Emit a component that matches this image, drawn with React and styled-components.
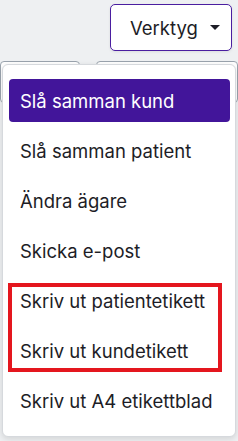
import React from 'react';
import styled, { createGlobalStyle } from 'styled-components';

const GlobalStyle = createGlobalStyle`
  html, body {
    margin: 0;
    padding: 0;
    background: #eef0f2;
    font-family: Inter, "Noto Sans", "Liberation Sans", sans-serif;
    overflow: hidden;
  }
`;

const Page = styled.div`
  position: relative;
  width: 238px;
  height: 441px;
  overflow: hidden;
`;

const Toolbar = styled.div`
  display: flex;
  justify-content: flex-end;
  padding: 4px 6px 0 0;
  height: 57px;
  box-sizing: border-box;
`;

const ToolButton = styled.button`
  display: flex;
  align-items: center;
  gap: 12px;
  height: 47px;
  width: 122px;
  padding: 0 0 0 19px;
  box-sizing: border-box;
  background: #fff;
  border: 1px solid #4a1ea0;
  border-radius: 5px;
  font-family: inherit;
  font-size: 18.5px;
  color: #1d1d26;
  box-shadow: 0 1px 3px rgba(0, 0, 0, 0.08);
`;

const Caret = styled.span`
  width: 0;
  height: 0;
  border-left: 5px solid transparent;
  border-right: 5px solid transparent;
  border-top: 5px solid #1d1d26;
`;

const Fields = styled.div`
  display: flex;
  gap: 16px;
  padding: 4px 0 0 0;
`;

const Field = styled.div`
  flex: ${p => p.$grow};
  height: 40px;
  background: #fff;
  border: 1px solid #9aa3ad;
  border-radius: 4px;
`;

const Menu = styled.ul`
  position: absolute;
  top: 64px;
  left: 2px;
  width: 234px;
  box-sizing: border-box;
  margin: 0;
  padding: 14px 5px 14px 6px;
  list-style: none;
  display: flex;
  flex-direction: column;
  gap: 7px;
  background: #fff;
  border: 1px solid #d6d9dd;
  border-radius: 6px;
  box-shadow: 0 2px 6px rgba(0, 0, 0, 0.12);
`;

const Item = styled.li`
  height: 43px;
  display: flex;
  align-items: center;
  padding-left: 11px;
  border-radius: 4px;
  font-size: 18.5px;
  color: ${p => (p.$active ? '#fff' : '#1d1d26')};
  background: ${p => (p.$active ? '#42159a' : 'transparent')};
  white-space: nowrap;
`;

const Highlight = styled.div`
  position: absolute;
  left: 5px;
  top: 218px;
  width: 214px;
  height: 89px;
  box-sizing: border-box;
  border: 4px solid #e4161e;
  pointer-events: none;
`;

const items = [
  'Slå samman kund',
  'Slå samman patient',
  'Ändra ägare',
  'Skicka e-post',
  'Skriv ut patientetikett',
  'Skriv ut kundetikett',
  'Skriv ut A4 etikettblad',
];

export default function App() {
  return (
    <Page>
      <GlobalStyle />
      <Toolbar>
        <ToolButton>
          Verktyg
          <Caret />
        </ToolButton>
      </Toolbar>
      <Fields>
        <Field $grow={5} />
        <Field $grow={9} />
      </Fields>
      <Menu>
        {items.map((label, i) => (
          <Item key={label} $active={i === 0}>{label}</Item>
        ))}
        <Highlight />
      </Menu>
    </Page>
  );
}
